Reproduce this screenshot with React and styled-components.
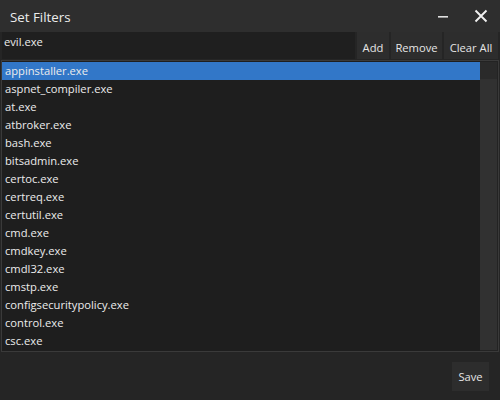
import React from "react";
import styled, { createGlobalStyle } from "styled-components";

const Global = createGlobalStyle`
  html, body { margin: 0; padding: 0; background: #252525; }
  body { font-family: "Open Sans", "Noto Sans", sans-serif; }
  * { box-sizing: border-box; }
`;

const Win = styled.div`
  width: 500px;
  height: 400px;
  display: flex;
  flex-direction: column;
  background: #252525;
  color: #e6e6e6;
  overflow: hidden;
`;

const TitleBar = styled.div`
  height: 32px;
  flex: none;
  background: #2e2e2e;
  display: flex;
  align-items: center;
  padding-left: 10px;
`;

const Title = styled.div`
  flex: 1;
  font-size: 13.3px;
  color: #ececec;
  margin-top: 1px;
`;

const TitleBtn = styled.div`
  width: 38px;
  height: 32px;
  display: flex;
  align-items: center;
  justify-content: center;
`;

const InputRow = styled.div`
  height: 27px;
  display: flex;
  gap: 2px;
  padding: 0 2px;
  flex: none;
`;

const Input = styled.div`
  flex: 1;
  background: #1f1f1f;
  font-size: 11.2px;
  padding: 2px 2px;
  line-height: 16px;
  color: #ececec;
`;

const Btn = styled.div`
  background: #2d2d2d;
  font-size: 11.2px;
  color: #e6e6e6;
  display: flex;
  align-items: center;
  justify-content: center;
  padding-top: 4px;
  width: ${p => p.w}px;
`;

const ListBox = styled.div`
  margin: 1px 1px 0 1px;
  height: 292px;
  border: 1px solid #3a3a3a;
  background: #1e1e1e;
  display: flex;
  flex: none;
`;

const Items = styled.div`
  flex: 1;
  padding-top: 1px;
`;

const Item = styled.div`
  height: 18px;
  line-height: 18px;
  font-size: 11.2px;
  padding-left: 3px;
  color: #ececec;
  background: ${p => (p.sel ? "#3277c8" : "transparent")};
`;

const Scroll = styled.div`
  width: 18px;
  display: flex;
  flex-direction: column;
  padding: 1px 1px 1px 0;
  background: #232323;
`;

const ScrollTop = styled.div`
  height: 17px;
  background: #2a2a2a;
`;

const ScrollThumb = styled.div`
  flex: 1;
  background: #313131;
`;

const Footer = styled.div`
  flex: 1;
  display: flex;
  justify-content: flex-end;
  align-items: flex-start;
  padding: 10px 11px 0 0;
`;

const SaveBtn = styled(Btn)`
  height: 29px;
  padding-top: 0;
`;

const items = [
  "appinstaller.exe",
  "aspnet_compiler.exe",
  "at.exe",
  "atbroker.exe",
  "bash.exe",
  "bitsadmin.exe",
  "certoc.exe",
  "certreq.exe",
  "certutil.exe",
  "cmd.exe",
  "cmdkey.exe",
  "cmdl32.exe",
  "cmstp.exe",
  "configsecuritypolicy.exe",
  "control.exe",
  "csc.exe",
];

export default function App() {
  return (
    <Win>
      <Global />
      <TitleBar>
        <Title>Set Filters</Title>
        <TitleBtn>
          <svg width="12" height="12" viewBox="0 0 12 12">
            <rect x="1" y="6" width="10" height="1.6" fill="#e0e0e0" />
          </svg>
        </TitleBtn>
        <TitleBtn>
          <svg width="14" height="14" viewBox="0 0 14 14">
            <path d="M1.5 1.5 L12.5 12.5 M12.5 1.5 L1.5 12.5" stroke="#f0f0f0" strokeWidth="1.9" />
          </svg>
        </TitleBtn>
      </TitleBar>
      <InputRow>
        <Input>evil.exe</Input>
        <Btn w={32}>Add</Btn>
        <Btn w={51}>Remove</Btn>
        <Btn w={54}>Clear All</Btn>
      </InputRow>
      <ListBox>
        <Items>
          {items.map((t, i) => (
            <Item key={t} sel={i === 0}>
              {t}
            </Item>
          ))}
        </Items>
        <Scroll>
          <ScrollTop />
          <ScrollThumb />
        </Scroll>
      </ListBox>
      <Footer>
        <SaveBtn w={37}>Save</SaveBtn>
      </Footer>
    </Win>
  );
}
